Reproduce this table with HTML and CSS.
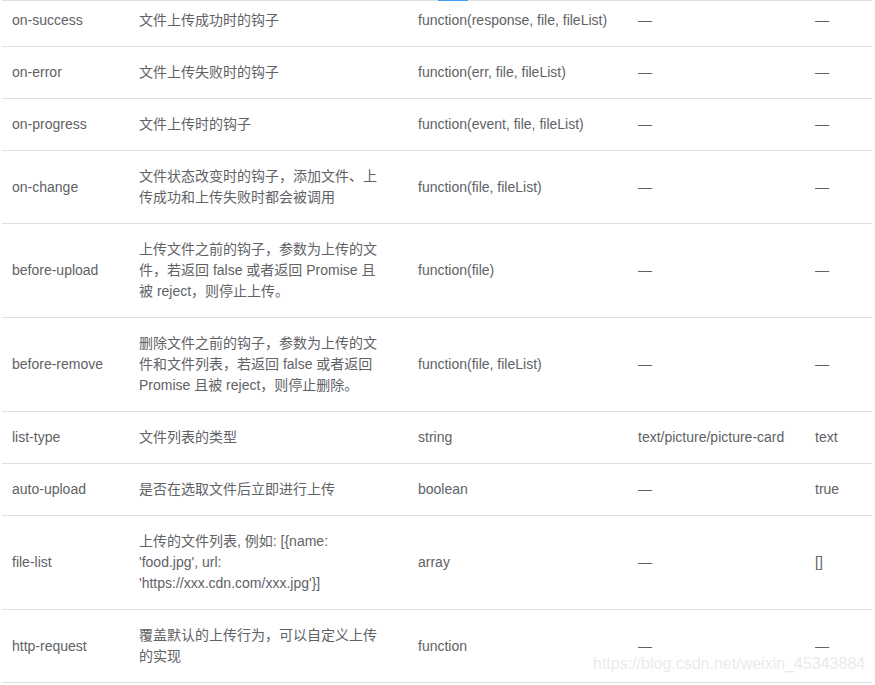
FILE: index.html
```html
<!DOCTYPE html>
<html lang="zh">
<head>
<meta charset="utf-8">
<title>Upload Attributes</title>
<link rel="stylesheet" href="styles.css">
</head>
<body>
<div class="page">
  <div class="top-rule"><span class="top-active"></span></div>
  <table class="attr-table">
    <colgroup>
      <col class="c-name"><col class="c-desc"><col class="c-type"><col class="c-opts"><col class="c-def">
    </colgroup>
    <tbody>
      <tr class="first"><td>on-success</td><td>文件上传成功时的钩子</td><td>function(response, file, fileList)</td><td>—</td><td>—</td></tr>
      <tr><td>on-error</td><td>文件上传失败时的钩子</td><td>function(err, file, fileList)</td><td>—</td><td>—</td></tr>
      <tr><td>on-progress</td><td>文件上传时的钩子</td><td>function(event, file, fileList)</td><td>—</td><td>—</td></tr>
      <tr><td>on-change</td><td>文件状态改变时的钩子，添加文件、上传成功和上传失败时都会被调用</td><td>function(file, fileList)</td><td>—</td><td>—</td></tr>
      <tr><td>before-upload</td><td>上传文件之前的钩子，参数为上传的文件，若返回 false 或者返回 Promise 且被 reject，则停止上传。</td><td>function(file)</td><td>—</td><td>—</td></tr>
      <tr><td>before-remove</td><td>删除文件之前的钩子，参数为上传的文件和文件列表，若返回 false 或者返回 Promise 且被 reject，则停止删除。</td><td>function(file, fileList)</td><td>—</td><td>—</td></tr>
      <tr><td>list-type</td><td>文件列表的类型</td><td>string</td><td>text/picture/picture-card</td><td>text</td></tr>
      <tr><td>auto-upload</td><td>是否在选取文件后立即进行上传</td><td>boolean</td><td>—</td><td>true</td></tr>
      <tr><td>file-list</td><td>上传的文件列表, 例如: [{name: 'food.jpg', url: 'https://xxx.cdn.com/xxx.jpg'}]</td><td>array</td><td>—</td><td>[]</td></tr>
      <tr><td>http-request</td><td>覆盖默认的上传行为，可以自定义上传的实现</td><td>function</td><td>—</td><td>—</td></tr>
    </tbody>
  </table>
  <div class="watermark">https://blog.csdn.net/weixin_45343884</div>
</div>
</body>
</html>
```

FILE: styles.css
```css
html, body {
  margin: 0;
  padding: 0;
  background: #fff;
}

.page {
  position: relative;
  width: 875px;
  height: 685px;
  overflow: hidden;
  padding-left: 2px;
  box-sizing: border-box;
  font-family: "Liberation Sans", "Noto Sans CJK SC", sans-serif;
}

.top-rule {
  position: relative;
  width: 870px;
  height: 1px;
  background: #dcdfe6;
}

.top-active {
  position: absolute;
  left: 436px;
  top: 0;
  width: 30px;
  height: 1px;
  background: #409eff;
}

.attr-table {
  border-collapse: collapse;
  table-layout: fixed;
  width: 870px;
  font-size: 14px;
  line-height: 21px;
  color: #606266;
  background: #fff;
}

.c-name { width: 122px; }
.c-desc { width: 279px; }
.c-type { width: 220px; }
.c-opts { width: 177px; }
.c-def  { width: 72px; }

.attr-table td {
  padding: 15px;
  border-bottom: 1px solid #dcdfe6;
  vertical-align: middle;
  text-align: left;
}

.attr-table td:first-child {
  padding-left: 10px;
}

.attr-table tr.first td {
  padding-top: 9px;
}

.watermark {
  position: absolute;
  left: 593px;
  top: 655px;
  font-family: "Liberation Sans", sans-serif;
  font-size: 16px;
  line-height: 18px;
  color: #ebebeb;
  white-space: nowrap;
}
```
